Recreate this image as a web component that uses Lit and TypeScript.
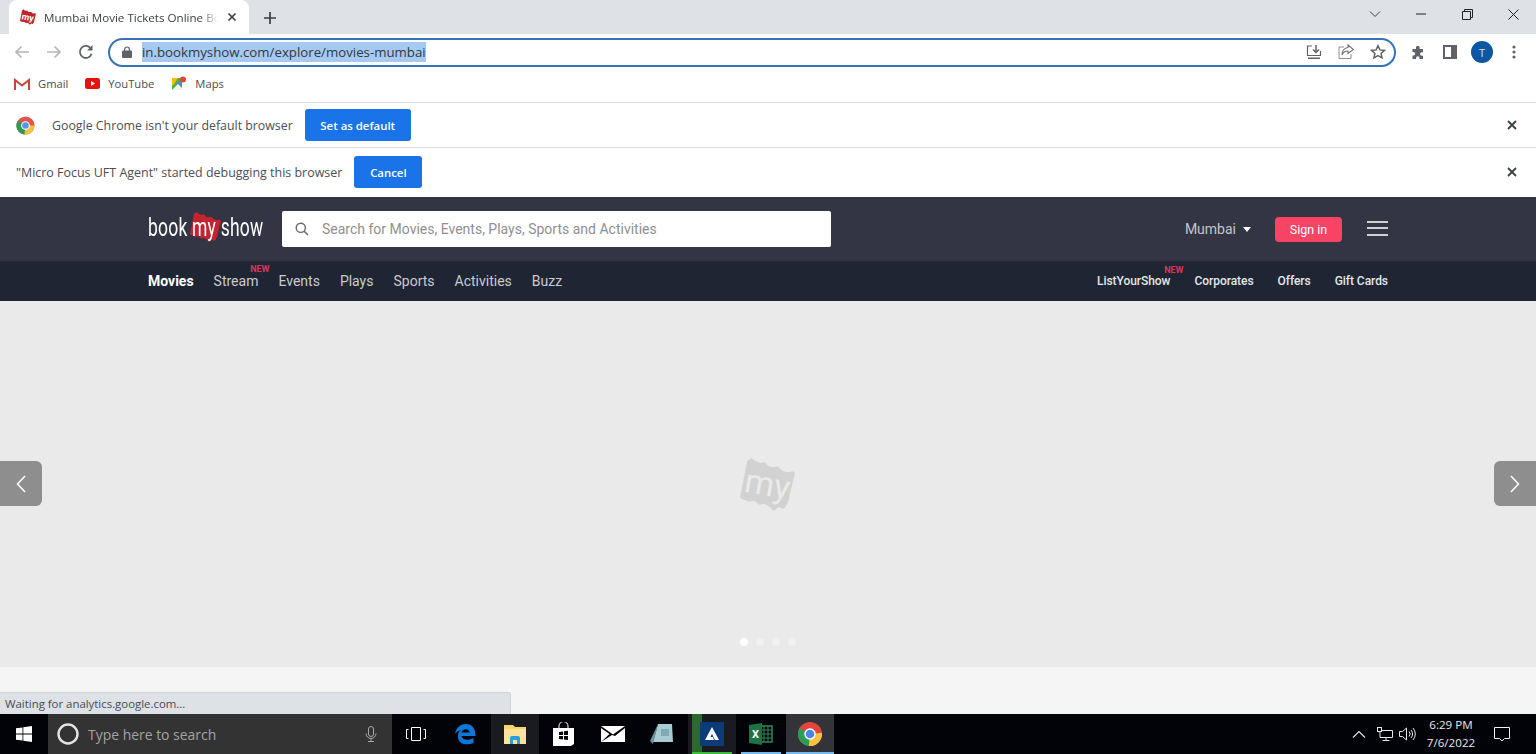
import { LitElement, html, css, svg } from "lit";
import { customElement } from "lit/decorators.js";

const blob = (fill: string) => svg`<path fill=${fill} d="M7 3 L11 0 L15 3 L20 5 L24 4 L28 8 L33 9 L37 8 L42 13 L47 14 L52 13 L54 15 L51 27 L47 44 L43 50 L38 48 L33 52 L28 47 L24 45 L19 46 L14 42 L9 43 L4 41 L0 39 Z" />`;

@customElement("app-root")
export class AppRoot extends LitElement {
  static styles = css`
    :host {
      display: flex;
      flex-direction: column;
      height: 754px;
      overflow: hidden;
      position: relative;
      font-family: "Open Sans", "Noto Sans", sans-serif;
      color: #3c4043;
      background: #fff;
    }
    svg {
      display: block;
      flex: none;
    }

    /* browser chrome */
    .tabstrip {
      height: 34px;
      background: #dee1e6;
      display: flex;
      align-items: flex-end;
      padding-left: 8px;
      flex: none;
    }
    .tab {
      width: 240px;
      height: 34px;
      margin-left: 1px;
      background: #fff;
      border-radius: 8px 8px 0 0;
      display: flex;
      align-items: center;
      padding: 0 9px 0 11px;
      box-sizing: border-box;
      font-size: 11.6px;
    }
    .tab-title {
      width: 174px;
      margin-left: 8px;
      white-space: nowrap;
      -webkit-mask-image: linear-gradient(to right, #000 90%, transparent);
      mask-image: linear-gradient(to right, #000 90%, transparent);
    }
    .tab-close {
      margin-left: 9px;
    }
    .newtab {
      margin-left: 14px;
      margin-bottom: 9px;
    }
    .winctl {
      margin-left: auto;
      display: flex;
      align-items: center;
      height: 34px;
      padding: 0 17px 6px 0;
      box-sizing: border-box;
    }
    .win-min {
      margin-left: 35px;
    }
    .win-max {
      margin-left: 36px;
    }
    .win-close {
      margin-left: 35px;
    }

    .toolbar {
      height: 36px;
      display: flex;
      align-items: center;
      flex: none;
      padding-left: 14px;
    }
    .nav-btn {
      margin-right: 16px;
    }
    .omni {
      width: 1288px;
      height: 29px;
      margin-left: 14px;
      box-sizing: border-box;
      border: 2px solid #3572b6;
      border-radius: 15px;
      display: flex;
      align-items: center;
      padding: 0 8px 0 12px;
    }
    .url {
      margin-left: 10px;
      font-size: 13.26px;
      line-height: 20px;
      background: #a6c9f1;
      color: #33383d;
      white-space: nowrap;
    }
    .omni-icons {
      margin-left: auto;
      display: flex;
      gap: 16px;
      align-items: center;
    }
    .tools {
      display: grid;
      grid-template-columns: repeat(4, 32px);
      justify-items: center;
      align-items: center;
      margin-left: 6px;
    }
    .avatar {
      width: 22px;
      height: 22px;
      border-radius: 50%;
      background: #0b57a4;
      color: #cfe4fb;
      font-size: 11px;
      display: flex;
      align-items: center;
      justify-content: center;
    }

    .bookmarks {
      height: 27px;
      padding-bottom: 5px;
      display: flex;
      align-items: center;
      padding-left: 14px;
      font-size: 11.2px;
      color: #4a4d52;
      border-bottom: 1px solid #dadce0;
      flex: none;
    }
    .bm {
      display: flex;
      align-items: center;
      gap: 8px;
      margin-right: 17px;
    }

    .infobar {
      display: flex;
      align-items: center;
      flex: none;
      font-size: 12.35px;
      color: #4b4e53;
      padding: 0 19px 0 16px;
    }
    .infobar.first {
      height: 44px;
      border-bottom: 1px solid #dadce0;
    }
    .infobar.second {
      height: 48px;
      padding-bottom: 1px;
      font-size: 12.46px;
    }
    .infobar .msg {
      margin-left: 17px;
    }
    .infobar.second .msg {
      margin-left: 0;
    }
    .info-btn {
      margin-left: 12px;
      background: #1a73e8;
      color: #fff;
      font-size: 11.4px;
      font-weight: 600;
      height: 32px;
      border-radius: 3px;
      display: flex;
      align-items: center;
      justify-content: center;
    }
    .first .info-btn {
      width: 106px;
    }
    .second .info-btn {
      width: 68px;
    }
    .info-close {
      margin-left: auto;
    }

    /* site */
    .site-top {
      height: 64px;
      background: #333545;
      flex: none;
      display: flex;
      align-items: center;
      padding: 0 148px;
    }
    .logo {
      position: relative;
      width: 116px;
      height: 36px;
      display: flex;
      align-items: center;
      color: #fff;
      font-family: "Roboto", sans-serif;
      font-size: 25px;
      white-space: nowrap;
    }
    .logo-text {
      position: relative;
      top: -2px;
      transform: scaleX(0.7);
      transform-origin: left center;
      letter-spacing: 0.3px;
    }
    .logo-blob {
      position: absolute;
      left: 42px;
      top: 0;
    }
    .search {
      margin-left: 18px;
      width: 549px;
      height: 36px;
      background: #fff;
      border-radius: 2px;
      display: flex;
      align-items: center;
      padding-left: 13px;
      box-sizing: border-box;
      font-family: "Roboto", sans-serif;
      font-size: 14px;
      color: #8f8f8f;
    }
    .search span {
      margin-left: 13px;
    }
    .city {
      margin-left: auto;
      display: flex;
      align-items: center;
      gap: 7px;
      font-family: "Roboto", sans-serif;
      font-size: 14px;
      color: #c5c5cb;
    }
    .caret {
      width: 0;
      height: 0;
      border: 4.5px solid transparent;
      border-top: 5px solid #fff;
      border-bottom: 0;
    }
    .signin {
      margin-left: 24px;
      width: 67px;
      height: 25px;
      background: #f84464;
      border-radius: 4px;
      color: #fff;
      font-family: "Roboto", sans-serif;
      font-size: 12.5px;
      display: flex;
      align-items: center;
      justify-content: center;
    }
    .burger {
      margin: 0 0 2px 25px;
      width: 21px;
      height: 15px;
      display: flex;
      flex-direction: column;
      justify-content: space-between;
    }
    .burger i {
      display: block;
      height: 2px;
      background: #cfd0d4;
    }

    .site-nav {
      height: 40px;
      background: #1f2533;
      flex: none;
      display: flex;
      align-items: center;
      padding: 0 148px;
      font-family: "Roboto", sans-serif;
      font-size: 14px;
      color: #c9cbd0;
      gap: 20px;
    }
    .site-nav b {
      color: #fff;
      font-weight: 700;
    }
    .nav-right {
      margin-left: auto;
      display: flex;
      gap: 24px;
      font-size: 12px;
      font-weight: 500;
      letter-spacing: -0.05px;
      color: #e4e5e8;
    }
    .has-new {
      position: relative;
    }
    .new {
      position: absolute;
      top: -8px;
      right: -11px;
      color: #dc3558;
      font-size: 9px;
      font-weight: 700;
      line-height: 8px;
      letter-spacing: 0;
    }
    .nav-right .new {
      right: -13px;
    }

    .hero {
      height: 366px;
      background: #eaeaea;
      flex: none;
      position: relative;
    }
    .hero-logo {
      position: absolute;
      left: 740px;
      top: 156px;
    }
    .arrow {
      position: absolute;
      top: 160px;
      width: 42px;
      height: 45px;
      background: #8e8e8e;
      display: flex;
      align-items: center;
      justify-content: center;
    }
    .arrow.left {
      left: 0;
      border-radius: 0 6px 6px 0;
    }
    .arrow.right {
      right: 0;
      border-radius: 6px 0 0 6px;
    }
    .dots-row {
      position: absolute;
      left: 740px;
      top: 337px;
      display: flex;
      gap: 8px;
    }
    .dots-row i {
      width: 8px;
      height: 8px;
      border-radius: 50%;
      background: #f1f1f1;
    }
    .dots-row i:first-child {
      background: #fff;
    }
    .below {
      flex: 1;
      background: #f5f5f5;
      position: relative;
    }
    .status {
      position: absolute;
      left: 0;
      bottom: 0;
      width: 511px;
      height: 22px;
      box-sizing: border-box;
      background: #dee1e6;
      border-top: 1px solid #cfd2d7;
      border-right: 1px solid #cfd2d7;
      border-top-right-radius: 3px;
      font-size: 11.4px;
      line-height: 21px;
      padding-left: 5px;
      color: #484b50;
    }

    /* taskbar */
    .taskbar {
      height: 40px;
      background: #020308;
      flex: none;
      display: flex;
      align-items: stretch;
      color: #fff;
    }
    .start {
      width: 48px;
      display: flex;
      align-items: center;
      justify-content: center;
    }
    .tb-search {
      width: 344px;
      background: #333;
      display: flex;
      align-items: center;
      padding: 0 15px 0 9px;
      box-sizing: border-box;
      color: #a3a3a3;
      font-size: 13.95px;
    }
    .tb-search span {
      margin-left: 9px;
    }
    .tb-search .mic {
      margin-left: auto;
    }
    .apps {
      width: 442px;
      display: flex;
      justify-content: space-between;
    }
    .app {
      width: 48px;
      display: flex;
      align-items: center;
      justify-content: center;
      position: relative;
      flex: none;
    }
    .app.open {
      background: #1a1b20;
    }
    .app.active {
      background: #33343a;
    }
    .app.run::after {
      content: "";
      position: absolute;
      left: 4px;
      right: 4px;
      bottom: 0;
      height: 2px;
      background: #76b9ed;
    }
    .app.active.run::after {
      left: 0;
      right: 0;
    }
    .app.flash::after {
      background: #3dbb3d;
    }
    .app.flash::before {
      content: "";
      position: absolute;
      left: 4px;
      top: 0;
      width: 10px;
      height: 100%;
      background: #2b6a2b;
    }
    .flash svg {
      position: relative;
      z-index: 1;
    }
    .tray {
      margin-left: auto;
      display: flex;
      align-items: center;
      font-size: 11.6px;
    }
    .tray-net {
      margin-left: 11px;
    }
    .tray-vol {
      margin-left: 6px;
    }
    .clock {
      margin-left: 9px;
      width: 52px;
      text-align: center;
      line-height: 18px;
      color: #e8e8e8;
    }
    .notif {
      margin: 0 26px 0 17px;
    }
  `;

  render() {
    return html`
      <div class="tabstrip">
        <div class="tab">
          <svg width="16" height="16" viewBox="0 0 54 52">${blob("#c4242f")}
            <text x="26" y="37" text-anchor="middle" fill="#fff" font-family="Roboto" font-weight="700" font-size="30" transform="rotate(10 26 26)">my</text>
          </svg>
          <div class="tab-title">Mumbai Movie Tickets Online Bo</div>
          <svg class="tab-close" width="10" height="10" viewBox="0 0 10 10"><path d="M1.5 1.5l7 7M8.5 1.5l-7 7" stroke="#3c4043" stroke-width="1.7" /></svg>
        </div>
        <svg class="newtab" width="14" height="14" viewBox="0 0 14 14"><path d="M7 1v12M1 7h12" stroke="#3c4043" stroke-width="1.7" /></svg>
        <div class="winctl">
          <svg width="12" height="8" viewBox="0 0 12 8"><path d="M1 1.5l5 5 5-5" fill="none" stroke="#3c4043" /></svg>
          <svg class="win-min" width="10" height="2" viewBox="0 0 10 2"><path d="M0 1h10" stroke="#222" /></svg>
          <svg class="win-max" width="11" height="11" viewBox="0 0 11 11"><path d="M.5 2.5h8v8h-8zM2.5 2.500v-2h8v8h-2" fill="none" stroke="#222" /></svg>
          <svg class="win-close" width="11" height="11" viewBox="0 0 11 11"><path d="M.5.5l10 10M10.500.5l-10 10" stroke="#222" /></svg>
        </div>
      </div>

      <div class="toolbar">
        <svg class="nav-btn" width="16" height="14" viewBox="0 0 16 14"><path d="M15 7H2M7.500 1.500L2 7l5.500 5.500" fill="none" stroke="#b4b6ba" stroke-width="1.7" /></svg>
        <svg class="nav-btn" width="16" height="14" viewBox="0 0 16 14"><path d="M1 7h13M8.500 1.500L14 7l-5.500 5.500" fill="none" stroke="#b4b6ba" stroke-width="1.7" /></svg>
        <svg width="16" height="16" viewBox="0 0 16 16"><path d="M13.600 9.800A6 6 0 1 1 12.300 3.800" fill="none" stroke="#5f6368" stroke-width="1.8" /><path d="M14.500 1v5.600H9z" fill="#5f6368" /></svg>
        <div class="omni">
          <svg width="10" height="12" viewBox="0 0 10 12"><path d="M2.600 5V3.400a2.400 2.400 0 0 1 4.800 0V5" fill="none" stroke="#5f6368" stroke-width="1.2" /><rect y="4.600" width="10" height="7.400" rx="1" fill="#5f6368" /></svg>
          <div class="url">in.bookmyshow.com/explore/movies-mumbai</div>
          <div class="omni-icons">
            <svg width="16" height="16" viewBox="0 0 16 16"><path d="M6 2H1.500v9.500h13V7" fill="none" stroke="#5f6368" stroke-width="1.2" /><path d="M10 1v7M7 5.500L10 8.500 13 5.500" fill="none" stroke="#5f6368" stroke-width="1.5" /><path d="M2 13.500h12V15H2z" fill="#5f6368" /></svg>
            <svg width="16" height="16" viewBox="0 0 16 16"><path d="M6 3H1v11.500h12V10" fill="none" stroke="#8a8d91" /><path d="M10 1l5.500 4.500L10 9.500V7C7 7 5 8.500 4 11c0-4 2.500-7 6-7.500z" fill="none" stroke="#6d7074" stroke-width="1.1" /></svg>
            <svg width="16" height="16" viewBox="0 0 16 16"><path d="M8 1.800l1.900 4.100 4.500.5-3.300 3 .9 4.500L8 11.600l-4 2.300.9-4.500-3.300-3 4.500-.5z" fill="none" stroke="#5f6368" stroke-width="1.5" /></svg>
          </div>
        </div>
        <div class="tools">
          <svg width="15" height="15" viewBox="0 0 15 15"><path d="M5 2.500a1.800 1.800 0 0 1 3.600 0V4H12v3.200h-1.200a1.800 1.800 0 0 0 0 3.600H12V14H8.500v-1a1.700 1.700 0 0 0-3.400 0v1H1.500v-3.500h1a1.700 1.700 0 0 0 0-3.400h-1V4H5z" fill="#5f6368" /></svg>
          <svg width="14" height="14" viewBox="0 0 14 14"><rect x="1" y="1" width="12" height="12" fill="none" stroke="#5f6368" stroke-width="2" /><rect x="8" y="1" width="5" height="12" fill="#5f6368" /></svg>
          <div class="avatar">T</div>
          <svg width="4" height="14" viewBox="0 0 4 14"><circle cx="2" cy="2" r="1.600" fill="#5f6368" /><circle cx="2" cy="7" r="1.600" fill="#5f6368" /><circle cx="2" cy="12" r="1.600" fill="#5f6368" /></svg>
        </div>
      </div>

      <div class="bookmarks">
        <div class="bm">
          <svg width="16" height="12" viewBox="0 0 16 12"><path d="M1 12V2l7 5.500L15 2v10" fill="none" stroke="#c5453a" stroke-width="2" /></svg>
          Gmail
        </div>
        <div class="bm">
          <svg width="15" height="11" viewBox="0 0 15 11"><rect width="15" height="11" rx="2.500" fill="#e8120c" /><path d="M6 3l4 2.500L6 8z" fill="#fff" /></svg>
          YouTube
        </div>
        <div class="bm">
          <svg width="16" height="15" viewBox="0 0 16 15"><path d="M1 2h10v12H1z" fill="#4caf50" /><path d="M1 14l6-6 6 6z" fill="#f2f2f2" /><path d="M6 6l5 5V6z" fill="#4285f4" /><path d="M3 8L1 10V2h6z" fill="#fbbc04" /><circle cx="12" cy="3.500" r="3" fill="#e0453a" /></svg>
          Maps
        </div>
      </div>

      <div class="infobar first">
        <svg width="19" height="19" viewBox="0 0 20 20">
          <circle cx="10" cy="10" r="9.500" fill="#e2564a" />
          <path d="M10 10L1.800 5A9.500 9.500 0 0 0 9 19.500z" fill="#2f9b57" />
          <path d="M10 10L19.500 10A9.500 9.500 0 0 1 9 19.500z" fill="#f5c242" />
          <circle cx="10" cy="10" r="4.600" fill="#fff" />
          <circle cx="10" cy="10" r="3.500" fill="#5a93e8" />
        </svg>
        <div class="msg">Google Chrome isn't your default browser</div>
        <div class="info-btn">Set as default</div>
        <svg class="info-close" width="10" height="10" viewBox="0 0 10 10"><path d="M1 1l8 8M9 1l-8 8" stroke="#3c4043" stroke-width="1.8" /></svg>
      </div>
      <div class="infobar second">
        <div class="msg">"Micro Focus UFT Agent" started debugging this browser</div>
        <div class="info-btn">Cancel</div>
        <svg class="info-close" width="10" height="10" viewBox="0 0 10 10"><path d="M1 1l8 8M9 1l-8 8" stroke="#3c4043" stroke-width="1.8" /></svg>
      </div>

      <div class="site-top">
        <div class="logo">
          <svg class="logo-blob" width="31" height="32" viewBox="0 0 54 52">${blob("#c4242f")}</svg>
          <span class="logo-text">book my show</span>
        </div>
        <div class="search">
          <svg width="14" height="14" viewBox="0 0 14 14"><circle cx="5.800" cy="5.800" r="4.600" fill="none" stroke="#666" stroke-width="1.4" /><path d="M9.200 9.200L13 13" stroke="#666" stroke-width="1.5" /></svg>
          <span>Search for Movies, Events, Plays, Sports and Activities</span>
        </div>
        <div class="city">Mumbai <div class="caret"></div></div>
        <div class="signin">Sign in</div>
        <div class="burger"><i></i><i></i><i></i></div>
      </div>
      <div class="site-nav">
        <b>Movies</b>
        <div class="has-new">Stream<span class="new">NEW</span></div>
        <div>Events</div>
        <div>Plays</div>
        <div>Sports</div>
        <div>Activities</div>
        <div>Buzz</div>
        <div class="nav-right">
          <div class="has-new">ListYourShow<span class="new">NEW</span></div>
          <div>Corporates</div>
          <div>Offers</div>
          <div>Gift Cards</div>
        </div>
      </div>

      <div class="hero">
        <svg class="hero-logo" width="55" height="55" viewBox="0 0 54 52">${blob("#d2d2d2")}
          <text x="27" y="37" text-anchor="middle" fill="#eaeaea" font-family="Roboto" font-size="33" transform="rotate(10 27 26)">my</text>
        </svg>
        <div class="arrow left"><svg width="10" height="18" viewBox="0 0 10 18"><path d="M9 1L1.500 9 9 17" fill="none" stroke="#fff" stroke-width="1.5" /></svg></div>
        <div class="arrow right"><svg width="10" height="18" viewBox="0 0 10 18"><path d="M1 1l7.500 8L1 17" fill="none" stroke="#fff" stroke-width="1.5" /></svg></div>
        <div class="dots-row"><i></i><i></i><i></i><i></i></div>
      </div>
      <div class="below">
        <div class="status">Waiting for analytics.google.com...</div>
      </div>

      <div class="taskbar">
        <div class="start">
          <svg width="16" height="16" viewBox="0 0 16 16"><path d="M0 2.300l6.500-.9v6.200H0zM7.300 1.300L16 0v7.600H7.300zM0 8.400h6.500v6.200L0 13.700zM7.300 8.400H16V16l-8.700-1.300z" fill="#fff" /></svg>
        </div>
        <div class="tb-search">
          <svg width="22" height="22" viewBox="0 0 22 22"><circle cx="11" cy="11" r="9.500" fill="none" stroke="#e4e4e4" stroke-width="2.4" /></svg>
          <span>Type here to search</span>
          <svg class="mic" width="12" height="16" viewBox="0 0 12 16"><rect x="3.500" y=".5" width="5" height="10" rx="2.500" fill="none" stroke="#a8a8a8" /><path d="M1 7.500a5 5 0 0 0 10 0M6 12.500v3M3 15.500h6" fill="none" stroke="#a8a8a8" /></svg>
        </div>
        <div class="apps">
          <div class="app"><svg width="20" height="16" viewBox="0 0 20 16"><path d="M5.500 1.500h9v13h-9zM2.500 3.500h-2v9h2M17.500 3.500h2v9h-2" fill="none" stroke="#fff" /></svg></div>
          <div class="app">
            <svg width="22" height="22" viewBox="0 0 22 22"><path d="M1 11C2 4 7 1 12 1c6 0 9.500 4 9.500 12H7.500c.5 4 6.500 5 12 2v5c-7 3-16 1-15.500-7C4 10 5 8 7 7c-3 1-5 2-6 4zm6.500-1.500h8c0-4.500-7-4.500-8 0z" fill="#0c78d8" /></svg>
          </div>
          <div class="app open">
            <svg width="22" height="20" viewBox="0 0 22 20"><path d="M0 1h9l2 2h11v17H0z" fill="#f6d36b" /><path d="M0 5h22v15H0z" fill="#fae29a" /><path d="M6 20v-6a2 2 0 0 1 2-2h6a2 2 0 0 1 2 2v6h-3v-4H9v4z" fill="#2d9fd8" /></svg>
          </div>
          <div class="app">
            <svg width="21" height="24" viewBox="0 0 21 24"><path d="M6 7V4a4.500 4.500 0 0 1 9 0v3" fill="none" stroke="#fff" /><path d="M0 6h21v16l-3 2H0z" fill="#fff" /><path d="M6 10l4-.5V13H6zM11 9.300l4-.5V13h-4zM6 14h4v3.500L6 17zM11 14h4v4l-4-.5z" fill="#020308" /></svg>
          </div>
          <div class="app">
            <svg width="24" height="16" viewBox="0 0 24 16"><path d="M0 0h24L12 8.500z" fill="#fff" /><path d="M0 2l8.500 6L0 16zM0 16l11-7 3 1 10-8v14z" fill="#fff" /></svg>
          </div>
          <div class="app">
            <svg width="24" height="24" viewBox="0 0 24 24"><path d="M8 2h14l1 18H3z" fill="#a9cbd2" /><path d="M8 2L0 19l3 3 5-20z" fill="#6c8f99" /><path d="M11 7h8v7h-8z" fill="#7faab5" /></svg>
          </div>
          <div class="app open flash run">
            <svg width="24" height="24" viewBox="0 0 24 24"><rect width="24" height="24" fill="#0a3d78" /><path d="M12 5l7 13h-4l-3-6-1.500 3H13l1 3H5z" fill="#fff" /></svg>
          </div>
          <div class="app run">
            <svg width="24" height="22" viewBox="0 0 24 22"><path d="M10 3h13v16H10z" fill="none" stroke="#2e8a5a" stroke-width="1.5" /><path d="M15 3v16M19 3v16M10 7h13M10 11h13M10 15h13" stroke="#2e8a5a" /><path d="M0 2l13-2v22L0 20z" fill="#1f7244" /><text x="6.500" y="15" text-anchor="middle" fill="#fff" font-family="Roboto" font-weight="700" font-size="11">X</text></svg>
          </div>
          <div class="app active run">
            <svg width="24" height="24" viewBox="0 0 20 20">
              <circle cx="10" cy="10" r="10" fill="#e2453a" />
              <path d="M10 10L1.300 5A10 10 0 0 0 9 20z" fill="#2f9b57" />
              <path d="M10 10L20 9A10 10 0 0 1 9 20z" fill="#f5c242" />
              <circle cx="10" cy="10" r="4.800" fill="#fff" />
              <circle cx="10" cy="10" r="3.600" fill="#4a86e8" />
            </svg>
          </div>
        </div>
        <div class="tray">
          <svg width="14" height="8" viewBox="0 0 14 8"><path d="M1 7.500l6-6 6 6" fill="none" stroke="#e8e8e8" stroke-width="1.1" /></svg>
          <svg class="tray-net" width="16" height="14" viewBox="0 0 16 14"><path d="M3 3.500h12.500v7H3zM9 10.500v3M5.500 13.500h7" fill="none" stroke="#e8e8e8" /><rect x=".5" y=".5" width="4" height="4" fill="#020308" stroke="#e8e8e8" /></svg>
          <svg class="tray-vol" width="17" height="14" viewBox="0 0 17 14"><path d="M.5 4.500h3L7.500 1v12L3.500 9.500h-3zM10 4.500a3.500 3.500 0 0 1 0 5M12 3a6 6 0 0 1 0 8M14 1a9 9 0 0 1 0 12" fill="none" stroke="#e8e8e8" /></svg>
          <div class="clock">6:29 PM<br />7/6/2022</div>
          <svg class="notif" width="16" height="15" viewBox="0 0 16 15"><path d="M.5.500h15v11h-5L8 14l-2.500-2.500h-5z" fill="none" stroke="#f0f0f0" /></svg>
        </div>
      </div>
    `;
  }
}
